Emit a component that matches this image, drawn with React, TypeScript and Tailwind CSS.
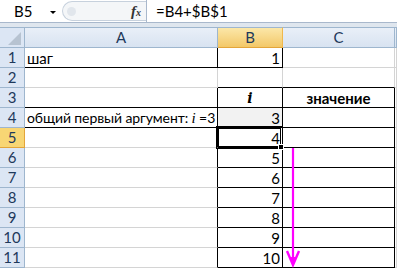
import React from 'react';

const font = { fontFamily: 'Lato, "Noto Sans", sans-serif' };

type Col = 'A' | 'B' | 'C' | 'D';
const colKeys: Col[] = ['A', 'B', 'C', 'D'];

// which cell edges carry a black border
function blackBottom(r: number, c: Col) {
  if (r === 1) return c === 'A' || c === 'B';
  if (r === 2) return c === 'B' || c === 'C';
  if (r === 3 || r === 4) return c === 'A' || c === 'B' || c === 'C';
  if (r >= 5) return c === 'B' || c === 'C';
  return false;
}

function blackRight(r: number, c: Col) {
  if (r === 1) return c === 'A' || c === 'B';
  if (r >= 3) return c === 'A' || c === 'B' || c === 'C';
  return false;
}

function content(r: number, c: Col) {
  if (r === 1 && c === 'A') return <span className="pl-[2px]">шаг</span>;
  if (r === 1 && c === 'B') return <span className="ml-auto pr-[2px]">1</span>;
  if (r === 3 && c === 'B')
    return (
      <span className="mx-auto font-bold italic" style={{ fontFamily: '"DejaVu Serif", serif', fontSize: 14 }}>
        i
      </span>
    );
  if (r === 3 && c === 'C') return <span className="mx-auto font-bold">значение</span>;
  if (r === 4 && c === 'A')
    return (
      <span className="whitespace-nowrap pl-[2px] text-[14px] tracking-[-0.1px]">
        общий первый аргумент:{' '}
        <span className="italic" style={{ fontFamily: '"Liberation Serif", serif', fontSize: 15 }}>
          i
        </span>
        {' '}=3
      </span>
    );
  if (c === 'B' && r >= 4) return <span className="ml-auto pr-[2px]">{r - 1}</span>;
  return null;
}

function FormulaBar() {
  return (
    <div className="flex h-[23px] border-b border-b-[#a9b8cc] bg-white">
      <div className="relative flex w-[62px] items-center pl-[14px] text-[15px] text-black">
        B5
        <span className="absolute left-[50px] top-[11px] h-0 w-0 border-x-[3px] border-t-[3px] border-x-transparent border-t-black" />
      </div>
      <div className="my-[1px] flex w-[84px] items-center rounded-l-full border border-r-0 border-[#c7d1dd] bg-[#f4f6f8]">
        <span className="ml-[4px] h-[9px] w-[9px] rounded-full bg-[#e1e6ec]" />
        <span
          className="ml-auto mr-[5px] font-bold italic text-[#333]"
          style={{ fontFamily: '"Liberation Serif", serif', fontSize: 15 }}
        >
          f<span className="text-[10px]">x</span>
        </span>
      </div>
      <div className="flex flex-1 items-center border-l border-l-[#a9b8cc] pl-[9px] text-[15px] text-black">
        =B4+$B$1
      </div>
    </div>
  );
}

export default function App() {
  const rows = Array.from({ length: 11 }, (_, i) => i + 1);
  return (
    <div className="h-[268px] w-[397px] overflow-hidden bg-white" style={font}>
      <FormulaBar />
      <div className="h-[4px] bg-[#dfe6ee]" />
      <div className="relative grid grid-cols-[25px_193px_65px_112px_1fr] grid-rows-[21px_repeat(11,20px)]">
        {/* header row */}
        <div className="relative border-y border-r border-[#9eb6ce] bg-[#dce6f4]">
          <svg className="absolute left-[8px] top-[4px]" width="13" height="13" viewBox="0 0 13 13">
            <polygon points="13,0 13,13 0,13" fill="#b7c3d1" />
          </svg>
        </div>
        {colKeys.map((c) =>
          c === 'B' ? (
            <div
              key={c}
              className="flex items-center justify-center border-y border-r border-t-[#9eb6ce] border-b-[#e3a53a] border-r-[#f0b84c] bg-gradient-to-b from-[#fbe7a8] to-[#f3c867] text-[15px] text-[#1e395b]"
            >
              B
            </div>
          ) : (
            <div
              key={c}
              className="flex items-center justify-center border-y border-r border-[#9eb6ce] bg-gradient-to-b from-[#e9eff8] to-[#d8e3f1] text-[15px] text-[#1e395b]"
            >
              {c === 'D' ? '' : c}
            </div>
          )
        )}
        {rows.map((r) => (
          <React.Fragment key={r}>
            <div
              className={
                r === 5
                  ? 'flex items-center justify-center border-b border-r border-b-[#e3a53a] border-r-[#e3a53a] bg-[#f8d674] text-[15px] text-[#1e395b]'
                  : 'flex items-center justify-center border-b border-r border-[#9eb6ce] bg-[#dce6f4] text-[15px] text-[#1e395b]'
              }
            >
              {r}
            </div>
            {colKeys.map((c) => (
              <div
                key={c}
                className={[
                  'flex items-center overflow-visible pt-[1px] text-[15px] leading-[19px] text-black',
                  'border-b border-r',
                  blackBottom(r, c) ? 'border-b-black' : 'border-b-[#d4d4d4]',
                  blackRight(r, c) ? 'border-r-black' : 'border-r-[#d4d4d4]',
                  r === 4 && c === 'B' ? 'bg-[#f2f2f2]' : 'bg-white',
                ].join(' ')}
              >
                {content(r, c)}
              </div>
            ))}
          </React.Fragment>
        ))}

        {/* active cell B5 */}
        <div className="absolute left-[216px] top-[99px] h-[23px] w-[67px] border-[3px] border-double border-black" />
        <div className="absolute left-[278px] top-[117px] h-[6px] w-[6px] border border-white bg-black" />

        {/* fill arrow */}
        <svg className="absolute left-0 top-0" width="397" height="241" viewBox="0 27 397 241">
          <line x1="293" y1="148" x2="293" y2="262" stroke="#ff00ff" strokeWidth="2.2" />
          <path d="M287 251 L293 265 L299 251" fill="none" stroke="#ff00ff" strokeWidth="2.4" />
          <path d="M290 257 L293 265 L296 257 Z" fill="#ff00ff" />
        </svg>
      </div>
    </div>
  );
}
